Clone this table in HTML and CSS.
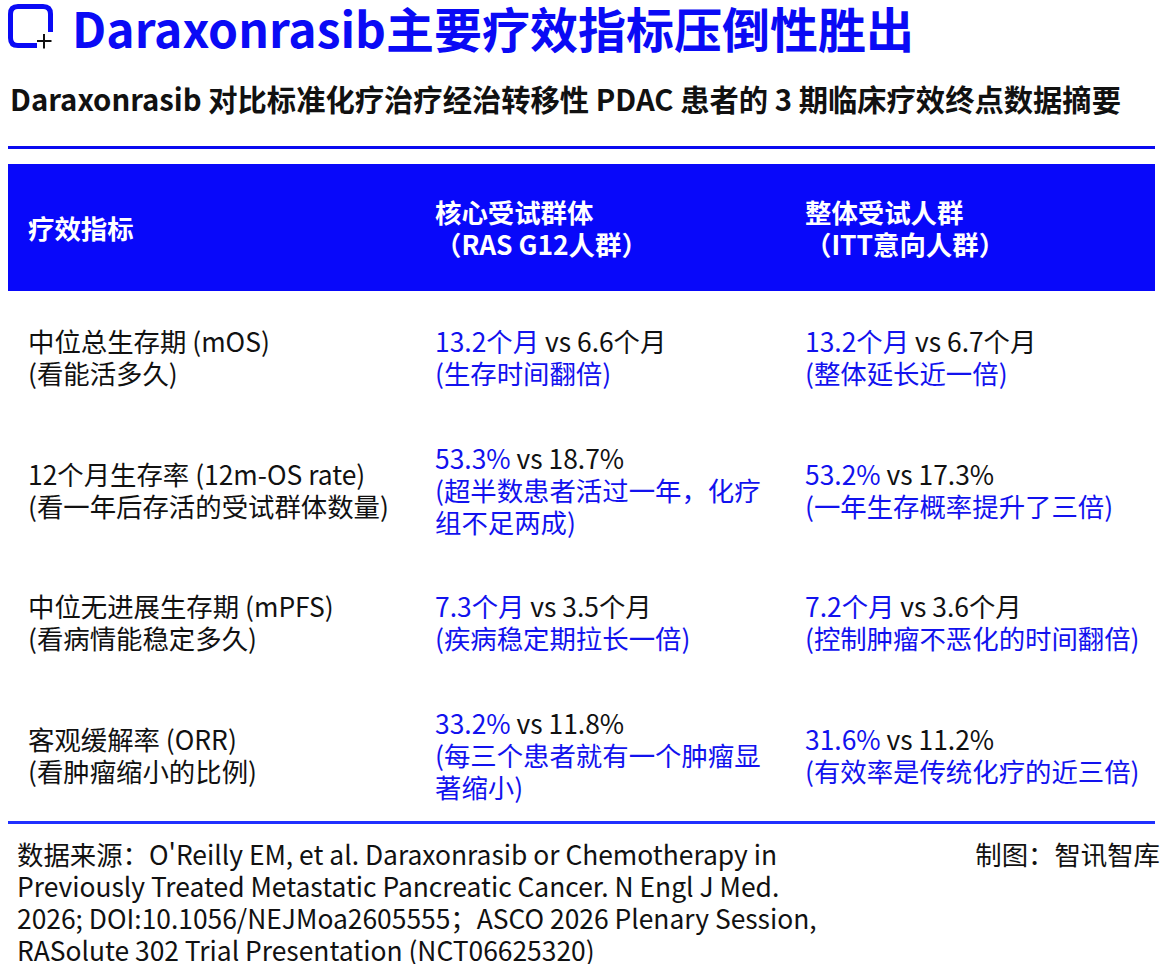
FILE: index.html
```html
<!DOCTYPE html>
<html lang="zh-CN">
<head>
<meta charset="utf-8">
<link rel="stylesheet" href="styles.css">
</head>
<body>
<div class="page">
  <header class="head">
    <svg class="logo" width="46" height="46" viewBox="0 0 46 46">
      <path d="M29 42.5 H10 Q2.5 42.5 2.5 35 V11 Q2.5 3.5 10 3.5 H35 Q42.5 3.5 42.5 11 V29" fill="none" stroke="#0a0af5" stroke-width="5"/>
      <path d="M36 31 V45.5 M29 38 H43.5" stroke="#111" stroke-width="2" fill="none"/>
    </svg>
    <h1 class="title">Daraxonrasib主要疗效指标压倒性胜出</h1>
  </header>
  <h2 class="subtitle">Daraxonrasib 对比标准化疗治疗经治转移性 PDAC 患者的 3 期临床疗效终点数据摘要</h2>
  <div class="rule"></div>
  <div class="table">
    <div class="row th">
      <div class="cell">疗效指标</div>
      <div class="cell">核心受试群体<br>（RAS G12人群）</div>
      <div class="cell">整体受试人群<br>（ITT意向人群）</div>
    </div>
    <div class="row">
      <div class="cell">中位总生存期 (mOS)<br>(看能活多久)</div>
      <div class="cell"><span class="hl">13.2个月</span> vs 6.6个月<br><span class="hl">(生存时间翻倍)</span></div>
      <div class="cell"><span class="hl">13.2个月</span> vs 6.7个月<br><span class="hl">(整体延长近一倍)</span></div>
    </div>
    <div class="row">
      <div class="cell">12个月生存率 (12m-OS rate)<br>(看一年后存活的受试群体数量)</div>
      <div class="cell"><span class="hl">53.3%</span> vs 18.7%<br><span class="hl">(超半数患者活过一年，化疗组不足两成)</span></div>
      <div class="cell"><span class="hl">53.2%</span> vs 17.3%<br><span class="hl">(一年生存概率提升了三倍)</span></div>
    </div>
    <div class="row">
      <div class="cell">中位无进展生存期 (mPFS)<br>(看病情能稳定多久)</div>
      <div class="cell"><span class="hl">7.3个月</span> vs 3.5个月<br><span class="hl">(疾病稳定期拉长一倍)</span></div>
      <div class="cell"><span class="hl">7.2个月</span> vs 3.6个月<br><span class="hl">(控制肿瘤不恶化的时间翻倍)</span></div>
    </div>
    <div class="row">
      <div class="cell">客观缓解率 (ORR)<br>(看肿瘤缩小的比例)</div>
      <div class="cell"><span class="hl">33.2%</span> vs 11.8%<br><span class="hl">(每三个患者就有一个肿瘤显著缩小)</span></div>
      <div class="cell"><span class="hl">31.6%</span> vs 11.2%<br><span class="hl">(有效率是传统化疗的近三倍)</span></div>
    </div>
  </div>
  <footer class="foot">
    <p class="source">数据来源：O'Reilly EM, et al. Daraxonrasib or Chemotherapy in Previously Treated Metastatic Pancreatic Cancer. N Engl J Med. 2026; DOI:10.1056/NEJMoa2605555；ASCO 2026 Plenary Session, RASolute 302 Trial Presentation (NCT06625320)</p>
    <p class="credit">制图：智讯智库</p>
  </footer>
</div>
</body>
</html>
```

FILE: styles.css
```css
html, body {
  margin: 0;
  padding: 0;
  background: #fff;
}
body {
  font-family: "Noto Sans CJK SC", "Noto Sans", sans-serif;
  color: #111;
  width: 1162px;
  overflow: hidden;
}
.page {
  padding: 0 7px 0 8px;
}
.head {
  display: flex;
  align-items: center;
  gap: 18px;
  height: 54px;
}
.logo {
  flex: none;
  display: block;
  margin-top: -2px;
}
.title {
  margin: 0;
  font-size: 48px;
  line-height: 54px;
  font-weight: 700;
  color: #0a0af5;
  white-space: nowrap;
}
.subtitle {
  margin: 24px 0 0 2px;
  font-size: 29.3px;
  line-height: 40px;
  font-weight: 700;
  color: #111;
  white-space: nowrap;
}
.rule {
  margin-top: 28px;
  height: 3px;
  background: #0a0af0;
}
.table {
  margin-top: 15px;
  border-bottom: 3px solid #2030ff;
}
.row {
  display: grid;
  grid-template-columns: 407px 370px 1fr;
  height: 132.5px;
  align-items: center;
}
.row.th {
  height: 127px;
  background: #0808fa;
  color: #fff;
  font-weight: 700;
}
.cell {
  padding: 0 20px;
  font-size: 26.4px;
  line-height: 32px;
}
.cell:last-child {
  padding-right: 4px;
}
.hl {
  color: #1212ee;
}
.foot {
  display: flex;
  justify-content: space-between;
  margin-right: -7px;
  padding: 14px 2px 0 9px;
}
.foot p {
  margin: 0;
  font-size: 26.4px;
  line-height: 32px;
  color: #111;
}
.source {
  width: 820px;
}
.credit {
  white-space: nowrap;
}
```
